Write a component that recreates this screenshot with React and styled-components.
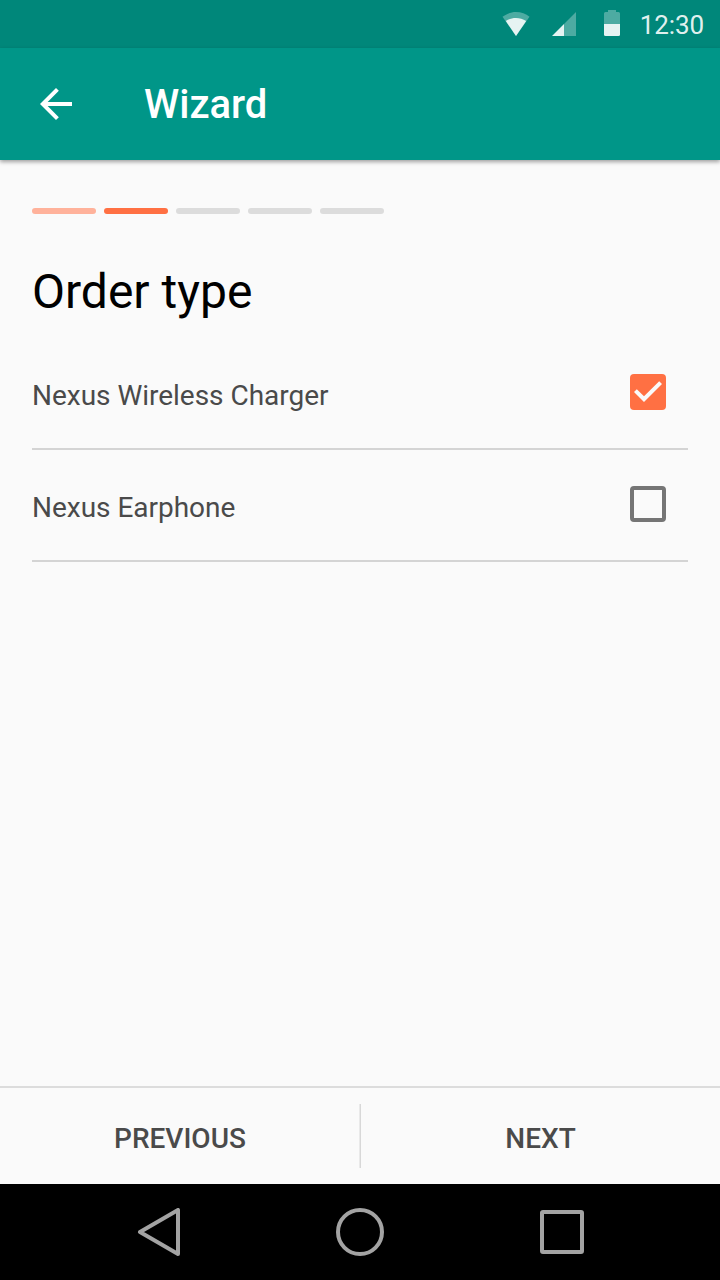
import React, { useState } from "react";
import styled, { createGlobalStyle } from "styled-components";

const GlobalStyle = createGlobalStyle`
  *, *::before, *::after { box-sizing: border-box; }
  body { margin: 0; font-family: Roboto, sans-serif; background: #fafafa; }
  button { font: inherit; border: 0; padding: 0; background: none; cursor: pointer; }
`;

const Screen = styled.div`
  display: flex;
  flex-direction: column;
  width: 720px;
  height: 1280px;
  background: #fafafa;
  overflow: hidden;
`;

const StatusBar = styled.header`
  display: flex;
  align-items: center;
  justify-content: flex-end;
  flex: none;
  height: 48px;
  padding-right: 16px;
  background: #00877a;
`;

const StatusIcons = styled.svg`
  display: block;
  width: 120px;
  height: 48px;
  margin-right: auto;
  margin-left: 500px;
  fill: #fff;
`;

const Clock = styled.time`
  padding-top: 2px;
  font-size: 26px;
  line-height: 30px;
  letter-spacing: -0.1px;
  color: rgba(255, 255, 255, 0.9);
`;

const AppBar = styled.div`
  display: flex;
  align-items: center;
  flex: none;
  gap: 64px;
  height: 112px;
  padding: 0 32px;
  background: #009688;
  box-shadow: 0 2px 4px rgba(0, 0, 0, 0.36);
  z-index: 1;
`;

const IconButton = styled.button`
  display: flex;
  width: 48px;
  height: 48px;
  color: #fff;
`;

const Glyph = styled.svg`
  display: block;
  width: ${({ $size }) => $size}px;
  height: ${({ $size }) => $size}px;
`;

const AppTitle = styled.h1`
  margin: 0;
  padding-top: 2px;
  font-size: 40px;
  font-weight: 500;
  line-height: 48px;
  color: #fff;
`;

const Content = styled.main`
  flex: 1;
  padding: 48px 32px 0;
`;

const Steps = styled.div`
  display: flex;
  gap: 8px;
`;

const stepColors = { done: "#ffb29b", current: "#ff7043", pending: "#dcdcdc" };

const Step = styled.span`
  width: 64px;
  height: 6px;
  border-radius: 3px;
  background: ${({ $state }) => stepColors[$state]};
`;

const Heading = styled.h2`
  margin: 50px 0 0;
  font-size: 48px;
  font-weight: 400;
  line-height: 56px;
  color: #000;
`;

const Options = styled.div`
  display: flex;
  flex-direction: column;
  margin-top: 18px;
`;

const Option = styled.label`
  display: flex;
  align-items: center;
  justify-content: space-between;
  height: 112px;
  padding: 0 22px 2px 0;
  border-bottom: 2px solid #d4d4d4;
  cursor: pointer;
`;

const OptionText = styled.span`
  padding-top: 7px;
  font-size: 28px;
  line-height: 34px;
  letter-spacing: -0.02px;
  color: #4a4a4a;
`;

const Checkbox = styled.button`
  display: flex;
  align-items: center;
  justify-content: center;
  width: 36px;
  height: 36px;
  border: ${({ $checked }) => ($checked ? "0" : "4px solid #757575")};
  border-radius: 4px;
  background: ${({ $checked }) => ($checked ? "#ff7043" : "transparent")};
  color: #fafafa;
`;

const Actions = styled.footer`
  display: flex;
  align-items: center;
  flex: none;
  height: 98px;
  border-top: 2px solid #dcdcdc;
`;

const Action = styled.button`
  flex: 0 0 359px;
  height: 96px;
  padding-top: 4px;
  padding-left: ${({ $inset }) => $inset || 0}px;
  font-size: 28px;
  font-weight: 500;
  color: #4a4a4a;
`;

const Separator = styled.span`
  width: 2px;
  height: 64px;
  background: linear-gradient(to right, #e9e9e9 50%, #d8d8d8 50%);
`;

const NavBar = styled.nav`
  display: flex;
  align-items: center;
  justify-content: center;
  flex: none;
  gap: 154px;
  height: 96px;
  background: #000;
`;

const NavButton = styled.button`
  display: flex;
  width: 48px;
  height: 48px;
  color: #a3a3a3;
`;

const steps = ["done", "current", "pending", "pending", "pending"];
const products = ["Nexus Wireless Charger", "Nexus Earphone"];

export default function App() {
  const [selected, setSelected] = useState([true, false]);
  const toggle = (index) =>
    setSelected(selected.map((value, i) => (i === index ? !value : value)));

  return (
    <>
      <GlobalStyle />
      <Screen>
        <StatusBar>
          <StatusIcons viewBox="0 0 120 48" aria-hidden="true">
            <path opacity=".3" d="M16 36 2.500 16.800C6 14 10.800 12 16 12s10 2 13.500 4.800Z" />
            <path opacity=".86" d="M16 36 5.800 21C9 19 12.400 18 16 18s7 1 10.200 3Z" />
            <path opacity=".3" d="M64 24 76 12v24H64Z" />
            <path opacity=".9" d="M52 36 64 24v12Z" />
            <path opacity=".3" d="M104 24V13.500q0-1.500 1.500-1.500H108v-2h8v2h2.500q1.500 0 1.500 1.500V24Z" />
            <path opacity=".9" d="M104 24h16v10.500q0 1.500-1.500 1.500h-13q-1.500 0-1.500-1.500Z" />
          </StatusIcons>
          <Clock>12:30</Clock>
        </StatusBar>

        <AppBar>
          <IconButton aria-label="Back">
            <Glyph $size={48} viewBox="0 0 24 24" fill="currentColor">
              <path d="M20 11H7.830l5.590-5.590L12 4l-8 8 8 8 1.410-1.410L7.830 13H20z" />
            </Glyph>
          </IconButton>
          <AppTitle>Wizard</AppTitle>
        </AppBar>

        <Content>
          <Steps>
            {steps.map((state, index) => (
              <Step key={index} $state={state} />
            ))}
          </Steps>
          <Heading>Order type</Heading>
          <Options>
            {products.map((name, index) => (
              <Option key={name}>
                <OptionText>{name}</OptionText>
                <Checkbox
                  role="checkbox"
                  aria-checked={selected[index]}
                  aria-label={name}
                  $checked={selected[index]}
                  onClick={() => toggle(index)}
                >
                  {selected[index] && (
                    <Glyph $size={36} viewBox="3 3 18 18" fill="currentColor">
                      <path d="M10 17l-5-5 1.410-1.410L10 14.170l7.590-7.590L19 8z" />
                    </Glyph>
                  )}
                </Checkbox>
              </Option>
            ))}
          </Options>
        </Content>

        <Actions>
          <Action $inset={1}>PREVIOUS</Action>
          <Separator />
          <Action>NEXT</Action>
        </Actions>

        <NavBar>
          <NavButton aria-label="Back">
            <Glyph $size={48} viewBox="0 0 48 48" fill="none" stroke="currentColor" strokeWidth="4" strokeLinejoin="round">
              <path d="M44 2v44L6 24Z" />
            </Glyph>
          </NavButton>
          <NavButton aria-label="Home">
            <Glyph $size={48} viewBox="0 0 48 48" fill="none" stroke="currentColor" strokeWidth="4">
              <circle cx="24" cy="24" r="22" />
            </Glyph>
          </NavButton>
          <NavButton aria-label="Recent apps">
            <Glyph $size={48} viewBox="0 0 48 48" fill="none" stroke="currentColor" strokeWidth="4">
              <rect x="4" y="4" width="40" height="40" rx="1" />
            </Glyph>
          </NavButton>
        </NavBar>
      </Screen>
    </>
  );
}
